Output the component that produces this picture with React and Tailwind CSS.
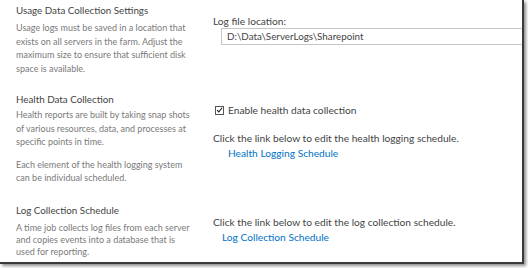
import React from "react";

const font = { fontFamily: 'Lato, "Open Sans", sans-serif' };

function Lines({ lines }) {
  return lines.map((l, i) => (
    <div key={i} className="whitespace-nowrap">
      {l}
    </div>
  ));
}

function Section({ title, children, right, className = "", descClass = "mt-[2px] leading-[13.2px]" }) {
  return (
    <div className={"flex " + className}>
      <div className="w-[213px] shrink-0 pl-4">
        <div className="text-[9.8px] leading-[14px] text-[#444444]">{title}</div>
        <div className={"text-[9px] text-[#7a7a7a] " + descClass}>{children}</div>
      </div>
      <div className="flex-1 pt-[11px]">{right}</div>
    </div>
  );
}

const rightText = "text-[10.2px] leading-[14px] text-[#444444]";
const linkText = "text-[10.2px] leading-[14px] text-[#0072c6]";

export default function App() {
  return (
    <div className="w-[528px] h-[268px] bg-white" style={font}>
      <div className="w-[524px] h-[264px] bg-white border-r-2 border-b-2 border-[#3a3a3a] shadow-[2px_2px_3px_rgba(0,0,0,0.45)] overflow-hidden">
        <Section
          className="pt-[3px]"
          descClass="mt-[4px] leading-[13.6px]"
          title="Usage Data Collection Settings"
          right={
            <div>
              <div className={rightText}>Log file location:</div>
              <div className="ml-2 h-[17px] border border-[#c6c6c6] border-r-0 pl-[5px] text-[9.8px] leading-[15px] text-[#444444]">
                D:\Data\ServerLogs\Sharepoint
              </div>
            </div>
          }
        >
          <Lines
            lines={[
              "Usage logs must be saved in a location that",
              "exists on all servers in the farm. Adjust the",
              "maximum size to ensure that sufficient disk",
              "space is available.",
            ]}
          />
        </Section>

        <Section
          className="pt-[17px]"
          title="Health Data Collection"
          right={
            <div>
              <div className={"flex items-center ml-[2px] " + rightText}>
                <span className="w-[9px] h-[9px] border border-[#555] flex items-center justify-center mr-[4px]">
                  <svg viewBox="0 0 10 10" className="w-[8px] h-[8px]">
                    <path d="M1.5 5.2 L4 7.8 L8.8 1.8" stroke="#222" strokeWidth="1.6" fill="none" />
                  </svg>
                </span>
                Enable health data collection
              </div>
              <div className={"mt-[14px] " + rightText}>
                Click the link below to edit the health logging schedule.
              </div>
              <div className={"mt-[1px] pl-[15px] " + linkText}>Health Logging Schedule</div>
            </div>
          }
        >
          <Lines
            lines={[
              "Health reports are built by taking snap shots",
              "of various resources, data, and processes at",
              "specific points in time.",
            ]}
          />
          <div className="mt-[10px]">
            <Lines lines={["Each element of the health logging system", "can be individual scheduled."]} />
          </div>
        </Section>

        <Section
          className="pt-[19px]"
          descClass="mt-[5px] leading-[12px]"
          title="Log Collection Schedule"
          right={
            <div>
              <div className={"mt-[1px] " + rightText}>
                Click the link below to edit the log collection schedule.
              </div>
              <div className={"mt-[1px] pl-[9px] " + linkText}>Log Collection Schedule</div>
            </div>
          }
        >
          <Lines
            lines={[
              "A time job collects log files from each server",
              "and copies events into a database that is",
              "used for reporting.",
            ]}
          />
        </Section>
      </div>
    </div>
  );
}
